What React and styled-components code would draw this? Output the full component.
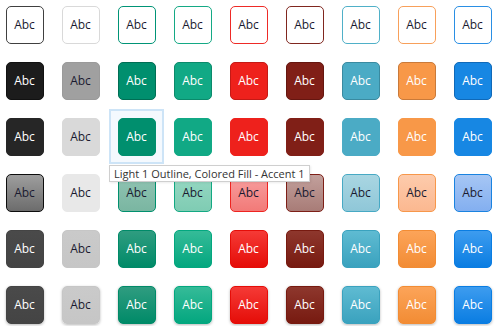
import React from "react";
import styled, { createGlobalStyle, css } from "styled-components";

const Global = createGlobalStyle`
  html, body {
    margin: 0;
    padding: 0;
    background: #ffffff;
    font-family: "Open Sans", "Noto Sans", sans-serif;
  }
`;

// one entry per accent column
const accents = [
  { base: "#262626", fill: "#1c1c1c", edge: "#111111", outline: "#404040", tint: ["#9e9e9e", "#6c6c6c"], tintEdge: "#0d0d0d", grad: ["#4a4a4a", "#444444"], darkText: false },
  { base: "#d9d9d9", fill: "#a0a0a0", edge: "#9a9a9a", outline: "#d9d9d9", tint: ["#e8e8e8", "#e8e8e8"], tintEdge: "#e8e8e8", grad: ["#cacaca", "#c6c6c6"], darkText: true },
  { base: "#008f6e", fill: "#008f6e", edge: "#006e54", outline: "#009476", tint: ["#91c4b3", "#7ab6a1"], tintEdge: "#00906e", grad: ["#2f9c80", "#008a68"], darkText: false },
  { base: "#11a985", fill: "#11a985", edge: "#0b8a6b", outline: "#14a985", tint: ["#97d8c3", "#7fccb3"], tintEdge: "#13a983", grad: ["#35bb98", "#03a77f"], darkText: false },
  { base: "#ee211c", fill: "#ee211c", edge: "#c41a16", outline: "#ee2a26", tint: ["#f8a0a0", "#f27a78"], tintEdge: "#ee2420", grad: ["#f53a36", "#e50d08"], darkText: false },
  { base: "#801f17", fill: "#801f17", edge: "#651610", outline: "#80271f", tint: ["#c2a09c", "#a87c77"], tintEdge: "#7e1f17", grad: ["#8e372d", "#771a10"], darkText: false },
  { base: "#4babc5", fill: "#4babc5", edge: "#3a8aa0", outline: "#4fb0c8", tint: ["#a9d6e2", "#8fc7d8"], tintEdge: "#47a9c4", grad: ["#5fbbd2", "#3aa2be"], darkText: false },
  { base: "#f89848", fill: "#f89848", edge: "#c97a3a", outline: "#f8a05a", tint: ["#fdcbac", "#fbb890"], tintEdge: "#f7974a", grad: ["#fca459", "#f28c34"], darkText: false },
  { base: "#1787e3", fill: "#1787e3", edge: "#1069b8", outline: "#2a8fe4", tint: ["#a6c6f4", "#83aff0"], tintEdge: "#1a83e0", grad: ["#3d9cef", "#0a7de2"], darkText: false },
];

const rows = ["outline", "fill", "flat", "subtle", "gradient", "shadow"];

const DARK = "#1a1a30";

const Gallery = styled.div`
  display: grid;
  grid-template-columns: repeat(9, 56px);
  grid-auto-rows: 56px;
  margin: -4px 0 0 -4px;
`;

const Cell = styled.div`
  position: relative;
  display: flex;
  align-items: center;
  justify-content: center;
  box-sizing: border-box;
  padding: 1px 0 0 1px;
  ${({ $hover }) =>
    $hover &&
    css`
      border: 2px solid #cde4f7;
      background: #f4f9fe;
      padding: 0;
      margin: 1px 0 0 1px;
    `}
`;

const variant = {
  outline: (a) => css`
    background: #ffffff;
    border: 1px solid ${a.outline};
    color: ${DARK};
  `,
  fill: (a) => css`
    background: ${a.fill};
    border: 1px solid ${a.edge};
    color: ${a.darkText ? DARK : "#ffffff"};
  `,
  flat: (a) => css`
    background: ${a.base};
    border: 1px solid ${a.base};
    color: ${a.darkText ? DARK : "#ffffff"};
  `,
  subtle: (a) => css`
    background: linear-gradient(${a.tint[0]}, ${a.tint[1]});
    border: 1px solid ${a.tintEdge};
    color: ${DARK};
  `,
  gradient: (a) => css`
    background: linear-gradient(${a.grad[0]}, ${a.grad[1]});
    border: 1px solid ${a.grad[1]};
    color: ${a.darkText ? DARK : "#ffffff"};
  `,
  shadow: (a) => css`
    background: linear-gradient(${a.grad[0]}, ${a.grad[1]});
    border: 1px solid ${a.grad[1]};
    color: ${a.darkText ? DARK : "#ffffff"};
    box-shadow: 0 1px 3px rgba(0, 0, 0, 0.28);
  `,
};

const Swatch = styled.div`
  width: 38px;
  height: 38px;
  box-sizing: border-box;
  border-radius: 5px;
  display: flex;
  align-items: center;
  justify-content: center;
  font-size: 12px;
  ${({ $kind, $accent }) => variant[$kind]($accent)}
`;

const Tooltip = styled.div`
  position: absolute;
  top: calc(100% + 3px);
  left: -2px;
  z-index: 2;
  white-space: nowrap;
  background: #ffffff;
  border: 1px solid #cfcfcf;
  box-shadow: 1px 1px 2px rgba(0, 0, 0, 0.08);
  color: #333333;
  font-size: 11px;
  line-height: 15px;
  padding: 0 4px;
`;

export default function App() {
  return (
    <>
      <Global />
      <Gallery>
        {rows.map((kind, r) =>
          accents.map((a, c) => {
            const hover = r === 2 && c === 2;
            return (
              <Cell key={`${r}-${c}`} $hover={hover}>
                <Swatch $kind={kind} $accent={a}>
                  Abc
                </Swatch>
                {hover && <Tooltip>Light 1 Outline, Colored Fill - Accent 1</Tooltip>}
              </Cell>
            );
          })
        )}
      </Gallery>
    </>
  );
}
